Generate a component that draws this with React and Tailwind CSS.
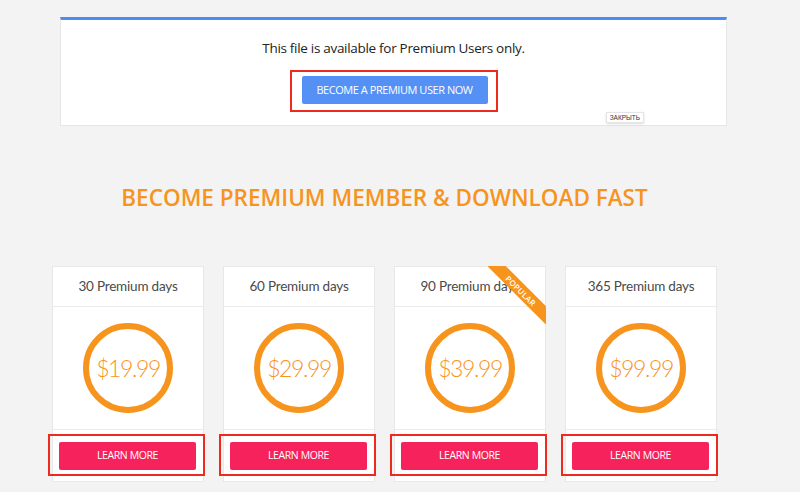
import React from 'react';

const PLANS = [
  { days: 30, price: '$19.99' },
  { days: 60, price: '$29.99' },
  { days: 90, price: '$39.99', popular: true },
  { days: 365, price: '$99.99' },
];

const PlanCard = ({ plan }) => (
  <div className="relative w-[152px] h-[216px] bg-white border border-[#e8e8e8] flex flex-col font-['Lato',sans-serif]">
    {/* Header */}
    <div className="h-[40px] shrink-0 border-b border-[#ebebeb] flex items-center justify-center text-[13.5px] text-[#4a4a4a] tracking-[-0.2px]">
      {plan.days} Premium days
    </div>

    {/* Price circle */}
    <div className="flex-1 border-b border-[#ebebeb] flex items-center justify-center">
      <div className="w-[90px] h-[90px] rounded-full border-[6px] border-[#f7941d] flex items-center justify-center">
        <span className="text-[23px] font-light text-[#f7941d] tracking-[-1.4px] leading-none">{plan.price}</span>
      </div>
    </div>

    {/* Footer */}
    <div className="h-[51px] shrink-0 flex items-center">
      <div className="relative ml-[6px]">
        <div className="absolute -left-[11px] -right-[9px] -top-[7px] -bottom-[6px] border-2 border-[#ee2a1e]" />
        <button className="w-[137px] h-[28px] rounded-[2px] bg-[#f5225b] text-white text-[10.5px] font-['Open_Sans',sans-serif] tracking-[-0.4px]">
          LEARN MORE
        </button>
      </div>
    </div>

    {plan.popular && (
      <div className="absolute -top-px -right-px w-[58px] h-[58px] overflow-hidden">
        <div className="absolute left-[-12px] top-[18px] w-[90px] h-[13px] rotate-45 bg-[#f7941d] flex items-center justify-center text-white text-[8px] font-semibold tracking-[0.3px] font-['Open_Sans',sans-serif]">
          POPULAR
        </div>
      </div>
    )}
  </div>
);

const App = () => {
  return (
    <div className="w-[800px] h-[492px] overflow-hidden bg-[#f3f3f3] pt-[17px]">
      {/* Premium notice panel */}
      <div className="relative ml-[60px] w-[667px] h-[109px] bg-white border border-[#e6e6e6] border-t-[3px] border-t-[#4b8bf4] flex flex-col items-center font-['Open_Sans',sans-serif]">
        <p className="mt-[18px] text-[13.5px] leading-[20px] text-[#222] tracking-[-0.3px]">
          This file is available for Premium Users only.
        </p>
        <div className="mt-[12px] border-2 border-[#ee2a1e] pt-[4px] pb-[6px] pl-[10px] pr-[8px]">
          <button className="w-[186px] h-[28px] rounded-[2px] bg-[#5590f4] text-white text-[11px] tracking-[-0.45px]">
            BECOME A PREMIUM USER NOW
          </button>
        </div>
        <div className="absolute right-[82px] bottom-[2px] h-[11px] px-[3px] bg-white border border-[#e4e4e4] shadow-sm flex items-center text-[6.5px] text-[#333] font-['Liberation_Sans',sans-serif]">
          ЗАКРЫТЬ
        </div>
      </div>

      {/* Heading */}
      <div className="ml-[52px] w-[665px]">
        <h1 className="mt-[57px] text-center text-[22.5px] leading-[30px] font-semibold text-[#f7941d] font-['Open_Sans',sans-serif]">
          BECOME PREMIUM MEMBER &amp; DOWNLOAD FAST
        </h1>

        {/* Plans */}
        <div className="mt-[53px] grid grid-cols-[repeat(4,152px)] gap-x-[19px]">
          {PLANS.map((plan) => (
            <PlanCard key={plan.days} plan={plan} />
          ))}
        </div>
      </div>
    </div>
  );
};

export default App;
